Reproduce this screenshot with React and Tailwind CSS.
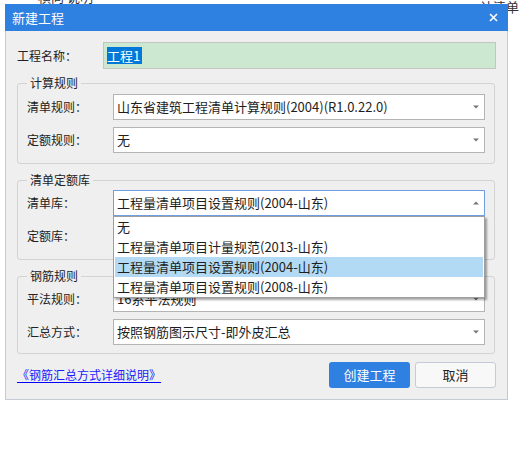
import React from "react";

const Arrow = ({ up }) => (
  <svg width="6" height="4" viewBox="0 0 6 4" className="shrink-0">
    <path d={up ? "M0 3.5 L3 0.5 L6 3.5 Z" : "M0 0.5 L6 0.5 L3 3.5 Z"} fill="#777" />
  </svg>
);

const Select = ({ value, active, up }) => (
  <div
    className={`flex-1 h-[26px] flex items-center justify-between bg-white border pl-[3px] pr-[5px] ${
      active ? "border-[#6f9fe2]" : "border-[#b4b4b4]"
    }`}
  >
    <span className="text-[13px] text-[#1e1e1e] whitespace-nowrap overflow-hidden leading-[24px]">{value}</span>
    <Arrow up={up} />
  </div>
);

const Row = ({ label, children }) => (
  <div className="flex items-center">
    <span className="w-[86px] shrink-0 text-[12px] text-[#222]">{label}</span>
    {children}
  </div>
);

const Group = ({ title, className, children }) => (
  <div className={`relative ml-[11px] w-[478px] border border-[#d3d3d3] rounded-[3px] px-[9px] flex flex-col gap-[7px] ${className}`}>
    <span className="absolute left-[9px] top-[-9px] px-[3px] bg-[#efefef] text-[12px] leading-[16px] text-[#222]">
      {title}
    </span>
    {children}
  </div>
);

const options = [
  "无",
  "工程量清单项目计量规范(2013-山东)",
  "工程量清单项目设置规则(2004-山东)",
  "工程量清单项目设置规则(2008-山东)",
];

export default function App() {
  return (
    <div
      className="relative w-[521px] h-[460px] bg-white overflow-hidden"
      style={{ fontFamily: '"Noto Sans CJK SC", "Noto Sans", sans-serif' }}
    >
      {/* text of the page behind the dialog */}
      <span className="absolute left-[38px] top-[-13px] text-[13px] text-[#333]">横向 说明</span>
      <span className="absolute left-[480px] top-[-3px] text-[13px] text-[#333] whitespace-nowrap">计清单</span>

      <div className="relative pt-[4px] pl-[5px]">
        <div className="w-[503px] h-[396px] bg-[#efefef] border-x border-b border-[#c5cbd6] flex flex-col">
          {/* title bar */}
          <div className="h-[27px] bg-[#2e80e1] flex items-center justify-between pl-[7px] pr-[10px] -mx-px">
            <span className="text-[13px] text-white">新建工程</span>
            <svg width="9" height="9" viewBox="0 0 9 9">
              <path d="M1 1 L8 8 M8 1 L1 8" stroke="white" strokeWidth="1.6" />
            </svg>
          </div>

          {/* project name */}
          <div className="mt-[11px] ml-[11px] mr-[11px] flex items-center">
            <span className="w-[86px] shrink-0 text-[12px] text-[#222]">工程名称：</span>
            <div className="flex-1 h-[27px] border border-[#c2c6c2] bg-[#cde8d1] flex items-center pl-[3px]">
              <span className="bg-[#0078d7] text-white text-[13px] leading-[17px] pr-[2px]">工程1</span>
            </div>
          </div>

          <Group title="计算规则" className="mt-[14px] pt-[10px] pb-[10px]">
            <Row label="清单规则：">
              <Select value="山东省建筑工程清单计算规则(2004)(R1.0.22.0)" />
            </Row>
            <Row label="定额规则：">
              <Select value="无" />
            </Row>
          </Group>

          <Group title="清单定额库" className="mt-[16px] pt-[9px] pb-[10px]">
            <Row label="清单库：">
              <div className="relative flex-1 flex">
                <Select value="工程量清单项目设置规则(2004-山东)" active up />
                {/* open dropdown list */}
                <div className="absolute z-20 left-0 top-[26px] w-[372px] bg-white border border-[#9e9e9e] px-[1px] shadow-[2px_2px_2px_rgba(0,0,0,0.35)]">
                  {options.map((o, i) => (
                    <div
                      key={o}
                      className={`h-[20px] flex items-center pl-[2px] text-[13px] text-[#1e1e1e] whitespace-nowrap ${
                        i === 2 ? "bg-[#b3daf4]" : ""
                      }`}
                    >
                      {o}
                    </div>
                  ))}
                </div>
              </div>
            </Row>
            <Row label="定额库：">
              <Select value="" />
            </Row>
          </Group>

          <Group title="钢筋规则" className="mt-[16px] pt-[9px] pb-[8px]">
            <Row label="平法规则：">
              <Select value="16系平法规则" />
            </Row>
            <Row label="汇总方式：">
              <Select value="按照钢筋图示尺寸-即外皮汇总" />
            </Row>
          </Group>

          {/* footer */}
          <div className="mt-[8px] ml-[11px] mr-[11px] flex items-center justify-between">
            <a className="text-[12px] text-[#1a1aff] underline underline-offset-2 decoration-[#0000ff]">
              《钢筋汇总方式详细说明》
            </a>
            <div className="flex gap-[5px]">
              <button className="w-[81px] h-[26px] rounded-[3px] bg-[#2e80e1] text-white text-[13px]">创建工程</button>
              <button className="w-[81px] h-[26px] rounded-[3px] bg-[#f8f8f8] border border-[#c5cbd6] text-[#222] text-[13px]">
                取消
              </button>
            </div>
          </div>
        </div>
      </div>
    </div>
  );
}
